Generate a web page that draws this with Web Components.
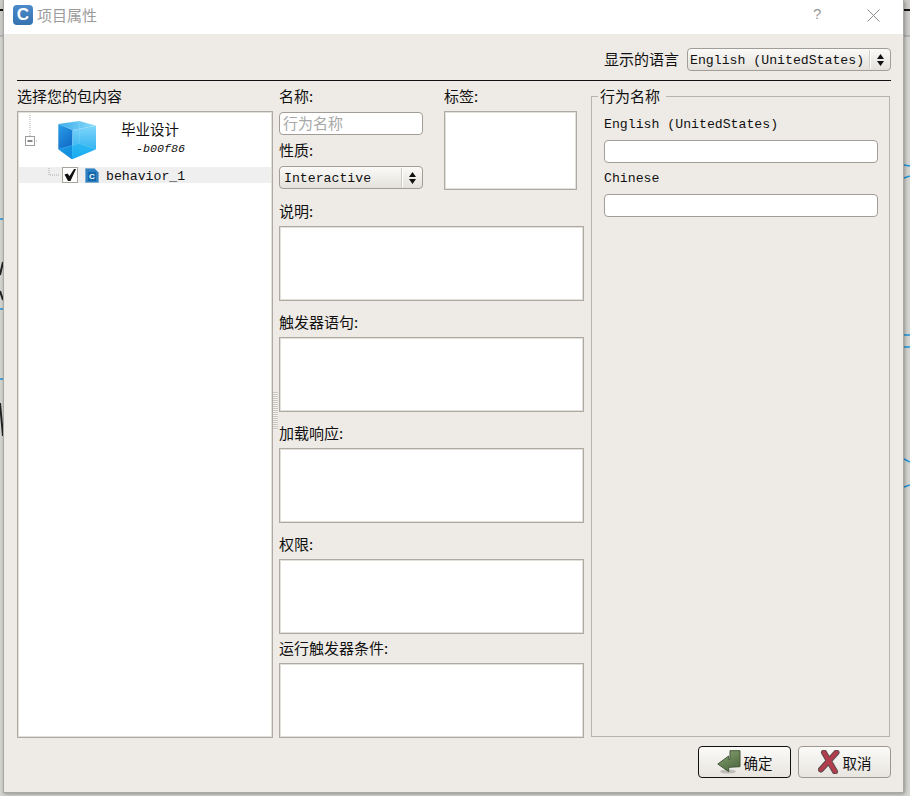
<!DOCTYPE html>
<html lang="zh">
<head>
<meta charset="utf-8">
<title>项目属性</title>
<style>
    html, body { margin: 0; height: 100%; }
    body {
        background: #d6d6d2;
        overflow: hidden;
        font: 15px "Noto Sans CJK SC", sans-serif;
        color: #111;
    }
    svg.backdrop { position: absolute; left: 0; top: 0; }
</style>
</head>
<body>
<svg class="backdrop" width="910" height="796" fill="none">
    <rect x="0" y="0" width="3" height="36" fill="#cfcdca"/>
    <rect x="904" y="0" width="6" height="36" fill="#cfcdca"/>
    <path d="M0 10H3M904 10H910" stroke="#111" stroke-width="2"/>
    <path d="M0 36H3M904 36H910" stroke="#999" stroke-width="1"/>
    <path d="M0 219H3M0 309H3M0 379H3" stroke="#1e96dc" stroke-width="1.5"/>
    <path d="M0 275L3 262M0 291L3 300M0 403L3 436" stroke="#222" stroke-width="2"/>
    <path d="M904 165L910 166M904 178L910 176M904 335H910M904 347H910M904 459L910 462M904 487L910 485" stroke="#1e96dc" stroke-width="1.5"/>
</svg>

<project-dialog>
    <title-bar slot="title">项目属性</title-bar>

    <span slot="lang-label">显示的语言</span>
    <combo-box slot="lang" style="width:204px;padding-left:2px">English (UnitedStates)</combo-box>

    <form-field slot="tree" label="选择您的包内容" label-height="30" fill>
        <package-tree></package-tree>
    </form-field>

    <form-field slot="name" label="名称:" label-height="31" gap="6"><line-input hint="行为名称"></line-input></form-field>
    <form-field slot="name" label="性质:" label-height="31" gap="6"><combo-box>Interactive</combo-box></form-field>
    <form-field slot="tags" label="标签:" label-height="30"><text-box style="height:79px"></text-box></form-field>

    <form-field slot="texts" label="说明:" label-height="37"><text-box></text-box></form-field>
    <form-field slot="texts" label="触发器语句:" label-height="36"><text-box></text-box></form-field>
    <form-field slot="texts" label="加载响应:" label-height="36"><text-box></text-box></form-field>
    <form-field slot="texts" label="权限:" label-height="36"><text-box></text-box></form-field>
    <form-field slot="texts" label="运行触发器条件:" label-height="29"><text-box></text-box></form-field>

    <group-box slot="names" title="行为名称">
        <form-field label="English (UnitedStates)" label-height="31" latin><line-input></line-input></form-field>
        <form-field label="Chinese" label-height="31" latin><line-input></line-input></form-field>
    </group-box>

    <dialog-button slot="buttons" icon="ok" focused>确定</dialog-button>
    <dialog-button slot="buttons" icon="cancel">取消</dialog-button>
</project-dialog>

<script>
class ShadowElement extends HTMLElement {
    constructor() {
        super();
        this.attachShadow({ mode: 'open' });
    }

    connectedCallback() {
        this.shadowRoot.innerHTML = `<style>${this.styles()}</style>${this.markup()}`;
    }

    styles() { return ''; }
    markup() { return '<slot></slot>'; }
}

class ProjectDialog extends ShadowElement {
    styles() {
        return `
            :host {
                display: flex;
                flex-direction: column;
                position: relative;
                box-sizing: border-box;
                width: 901px;
                height: 793px;
                margin-left: 3px;
                background: #eeebe6;
                border: 1px solid #a9a9a4;
                border-top: 0;
                box-shadow: 1px 1px 4px rgba(0, 0, 0, .35);
            }
            .body {
                display: flex;
                flex-direction: column;
                flex: 1;
                padding: 14px 12px 13px 13px;
            }
            .lang {
                display: flex;
                justify-content: flex-end;
                align-items: center;
                gap: 8px;
                height: 23px;
                padding-bottom: 9px;
                border-bottom: 1px solid #111;
            }
            ::slotted(span) { margin-bottom: 2px; }
            .main {
                display: grid;
                grid-template-columns: 256px 311px 306px;
                height: 657px;
            }
            .left { display: flex; }
            .middle {
                position: relative;
                width: 305px;
                margin-left: 6px;
                display: flex;
                flex-direction: column;
            }
            .grip {
                position: absolute;
                left: -6px;
                top: 311px;
                width: 5px;
                height: 38px;
                background: repeating-linear-gradient(#c9c6c0 0 1px, #f4f2ee 1px 2px);
            }
            .top { display: flex; gap: 21px; height: 108px; }
            .name-col { width: 144px; display: flex; flex-direction: column; }
            .tag-col { width: 133px; }
            .right { display: flex; margin-left: 7px; width: 299px; margin-top: 5px; height: 651px; }
            .footer {
                display: flex;
                justify-content: flex-end;
                gap: 7px;
                margin-top: 8px;
            }
            ::slotted(group-box) { flex: 1; }
        `;
    }

    markup() {
        return `
            <slot name="title"></slot>
            <div class="body">
                <div class="lang"><slot name="lang-label"></slot><slot name="lang"></slot></div>
                <div class="main">
                    <div class="left"><slot name="tree"></slot></div>
                    <div class="middle">
                        <div class="grip"></div>
                        <div class="top">
                            <div class="name-col"><slot name="name"></slot></div>
                            <div class="tag-col"><slot name="tags"></slot></div>
                        </div>
                        <slot name="texts"></slot>
                    </div>
                    <div class="right"><slot name="names"></slot></div>
                </div>
                <div class="footer"><slot name="buttons"></slot></div>
            </div>
        `;
    }
}

class TitleBar extends ShadowElement {
    styles() {
        return `
            :host {
                display: flex;
                align-items: center;
                height: 34px;
                background: #fff;
                color: #9b9b9b;
                padding: 0 0 4px 9px;
                box-sizing: border-box;
                flex: none;
            }
            .logo {
                display: flex;
                align-items: center;
                justify-content: center;
                width: 20px;
                height: 20px;
                margin-right: 4px;
                border-radius: 4px;
                background: linear-gradient(#4a8acb, #3672b0);
                color: #fff;
                font: bold 17px "Liberation Sans", sans-serif;
            }
            .title { flex: 1; position: relative; top: -1px; }
            .help {
                position: relative;
                left: 3px;
                top: -2px;
                font: 15px "Liberation Sans", sans-serif;
                color: #999;
                width: 12px;
                margin-right: 45px;
            }
            svg { margin-right: 23px; }
        `;
    }

    markup() {
        return `
            <span class="logo">C</span>
            <span class="title"><slot></slot></span>
            <span class="help">?</span>
            <svg width="13" height="13" viewBox="0 0 13 13"><path d="M.5.5L12.5 12.5M12.5.5L.5 12.5" stroke="#8c8c8c" fill="none"/></svg>
        `;
    }
}

class ComboBox extends ShadowElement {
    styles() {
        return `
            :host {
                display: flex;
                align-items: center;
                box-sizing: border-box;
                height: 23px;
                padding-left: 4px;
                border: 1px solid #a29e97;
                border-radius: 4px;
                background: linear-gradient(#fbfaf8, #e4e1db);
                font: 13.2px "Liberation Mono", monospace;
                color: #111;
            }
            .text { flex: 1; white-space: nowrap; padding-top: 2px; }
            .arrows {
                display: flex;
                align-items: center;
                justify-content: center;
                width: 19px;
                height: 19px;
                border-left: 1px solid #fff;
                box-shadow: -1px 0 0 #cfccc6;
            }
        `;
    }

    markup() {
        return `
            <span class="text"><slot></slot></span>
            <span class="arrows"><svg width="9" height="12" viewBox="0 0 9 12"><path d="M4.5 0L8 5H1zM4.5 12L1 7H8z" fill="#111"/></svg></span>
        `;
    }
}

// label sits at the bottom of its band, a fixed gap above the field
class FormField extends ShadowElement {
    styles() {
        const height = this.getAttribute('label-height');
        const gap = this.getAttribute('gap') || 5;
        const latin = this.hasAttribute('latin');
        return `
            :host { display: block; }
            :host([fill]) { display: flex; flex-direction: column; flex: 1; width: 256px; }
            .label {
                display: flex;
                align-items: flex-end;
                box-sizing: border-box;
                height: ${height}px;
                padding-bottom: ${gap}px;
                white-space: nowrap;
                ${latin ? 'font: 13.2px/20px "Liberation Mono", monospace;' : 'line-height: 20px;'}
            }
            ::slotted(package-tree) { flex: 1; }
        `;
    }

    markup() {
        return `<div class="label">${this.getAttribute('label')}</div><slot></slot>`;
    }
}

class LineInput extends ShadowElement {
    styles() {
        return `
            :host {
                display: flex;
                align-items: center;
                box-sizing: border-box;
                height: 23px;
                padding: 0 0 2px 3px;
                background: #fff;
                border: 1px solid #a29e97;
                border-radius: 4px;
                color: #a8a8a8;
                font-size: 15px;
            }
        `;
    }

    markup() {
        return `<span>${this.getAttribute('hint') || ''}</span>`;
    }
}

class TextBox extends ShadowElement {
    styles() {
        return `
            :host {
                display: block;
                box-sizing: border-box;
                height: 75px;
                background: #fff;
                border: 1px solid #aeaaa3;
                box-shadow: inset 0 0 0 1px #e2dfd9;
            }
        `;
    }
}

class GroupBox extends ShadowElement {
    styles() {
        return `
            :host { display: flex; }
            fieldset {
                flex: 1;
                box-sizing: border-box;
                margin: 0;
                padding: 3px 11px 0 12px;
                border: 1px solid #b8b4ad;
                min-width: 0;
            }
            legend { padding: 0 6px 0 2px; margin-left: -6px; font-size: 15px; line-height: 20px; }
        `;
    }

    markup() {
        return `<fieldset><legend>${this.getAttribute('title')}</legend><slot></slot></fieldset>`;
    }
}

class PackageTree extends ShadowElement {
    styles() {
        return `
            :host {
                display: block;
                box-sizing: border-box;
                background: #fff;
                border: 1px solid #aeaaa3;
                box-shadow: inset 0 0 0 1px #e2dfd9;
                padding: 2px 1px;
            }
            .root {
                display: flex;
                height: 53px;
            }
            .connector, .cube { flex: none; }
            .cube { margin: 6px 0 0 20px; }
            .names { margin-left: 24px; position: relative; }
            .package { position: absolute; left: 0; top: 5px; white-space: nowrap; font-size: 14.5px; line-height: 20px; }
            .id {
                position: absolute;
                left: 15px;
                top: 27px;
                white-space: nowrap;
                font: italic 11.7px/16px "Liberation Mono", monospace;
            }
            .row {
                display: flex;
                align-items: center;
                height: 16px;
                background: #efefef;
                font: 13.2px "Liberation Mono", monospace;
            }
            .check {
                flex: none;
                box-sizing: border-box;
                width: 16px;
                height: 16px;
                background: #fff;
                border: 1px solid #a8a49d;
                margin-left: 2px;
            }
            .check svg, .row svg { display: block; }
            .file { margin: 0 7px 0 7px; position: relative; flex: none; width: 14px; height: 15px; }
            .file b {
                position: absolute;
                left: 3px;
                top: 4px;
                width: 8px;
                text-align: center;
                font: bold 8px/9px "Liberation Sans", sans-serif;
                color: #fff;
            }
            .item-name { padding-top: 2px; }
        `;
    }

    markup() {
        return `
            <div class="root">
                <svg class="connector" width="18" height="53" viewBox="0 0 18 53">
                    <path d="M11 1V23M17 27H18" stroke="#aaa" stroke-dasharray="1 1" fill="none"/>
                    <rect x="6.500" y="22.500" width="9" height="9" fill="#fff" stroke="#9d9d9d"/>
                    <path d="M8.500 27H13.500" stroke="#111"/>
                </svg>
                <svg class="cube" width="40" height="40" viewBox="138 30 120 120">
                    <defs>
                        <linearGradient id="cubeLeft" x1="0" y1="0" x2="0.4" y2="1">
                            <stop offset="0" stop-color="#2a9fe8"/><stop offset="1" stop-color="#0d62c4"/>
                        </linearGradient>
                        <linearGradient id="cubeRight" x1="0" y1="0" x2="0" y2="1">
                            <stop offset="0" stop-color="#7fd6fb"/><stop offset=".6" stop-color="#41b8f3"/><stop offset="1" stop-color="#12a0ec"/>
                        </linearGradient>
                        <linearGradient id="cubeTop" x1="0" y1="0" x2="1" y2="0">
                            <stop offset="0" stop-color="#3aace9"/><stop offset="1" stop-color="#8cdcfb"/>
                        </linearGradient>
                    </defs>
                    <path d="M142 42L185 60L183 148L142 118Z" fill="url(#cubeLeft)"/>
                    <path d="M185 60L255 47V118L183 148Z" fill="url(#cubeRight)"/>
                    <path d="M142 42L205 33L255 47L185 60Z" fill="url(#cubeTop)"/>
                    <path d="M142 118L205 100L255 118L183 148Z" fill="#19b4f2" opacity=".55"/>
                    <path d="M205 33V100M142 118L205 100L255 118" stroke="#a8e6fc" stroke-width="1.500" opacity=".45" fill="none"/>
                </svg>
                <div class="names">
                    <span class="package">毕业设计</span>
                    <span class="id">-b00f86</span>
                </div>
            </div>
            <div class="row">
                <svg width="41" height="16" viewBox="0 0 41 16"><path d="M30 1V8H40" stroke="#aaa" stroke-dasharray="1 1" fill="none"/></svg>
                <span class="check">
                    <svg width="14" height="14" viewBox="0 0 14 14"><path d="M1.500 6.500L4.500 5.500L6.500 8L11 1H13L7.500 13H5Z" fill="#111"/></svg>
                </span>
                <span class="file">
                    <svg width="14" height="15" viewBox="0 0 14 15"><path d="M.5.5H9.500L13.500 4.500V14.500H.5Z" fill="#2d7fc0" stroke="#7faed2"/><rect x="3" y="4" width="8" height="9" fill="#1268ad"/></svg>
                    <b>C</b>
                </span>
                <span class="item-name">behavior_1</span>
            </div>
        `;
    }
}

class DialogButton extends ShadowElement {
    icons = {
        ok: `<svg width="24" height="24" viewBox="0 0 24 24">
                <defs>
                    <linearGradient id="okFill" x1="0" y1="0" x2="0.6" y2="1">
                        <stop offset="0" stop-color="#8ba574"/><stop offset="1" stop-color="#4f6a40"/>
                    </linearGradient>
                </defs>
                <ellipse cx="11" cy="21.500" rx="8" ry="2" fill="#000" opacity=".18"/>
                <path d="M13 .7H23V16.700L11.700 17.300V21.700L.8 14L11.700 6V9.300H13Z" fill="url(#okFill)" stroke="#46573b"/>
             </svg>`,
        cancel: `<svg width="22" height="24" viewBox="0 0 22 24">
                <path d="M6 2.500L17 21.500M18.500 2.500L3 19.500" stroke="#5c4b4d" stroke-width="6" stroke-linecap="round" fill="none"/>
                <path d="M6 2.500L17 21.500M18.500 2.500L3 19.500" stroke="#b23d4c" stroke-width="4" stroke-linecap="round" fill="none"/>
             </svg>`,
    };

    styles() {
        return `
            :host {
                display: flex;
                align-items: center;
                justify-content: center;
                gap: 3px;
                box-sizing: border-box;
                width: 93px;
                height: 32px;
                border: 1px solid #9c9890;
                border-radius: 4px;
                background: linear-gradient(#fbfaf8, #e8e5df);
                font-size: 14.5px;
            }
            :host([focused]) { border-color: #111; }
        `;
    }

    markup() {
        return `${this.icons[this.getAttribute('icon')]}<span><slot></slot></span>`;
    }
}

customElements.define('project-dialog', ProjectDialog);
customElements.define('title-bar', TitleBar);
customElements.define('combo-box', ComboBox);
customElements.define('form-field', FormField);
customElements.define('line-input', LineInput);
customElements.define('text-box', TextBox);
customElements.define('group-box', GroupBox);
customElements.define('package-tree', PackageTree);
customElements.define('dialog-button', DialogButton);
</script>
</body>
</html>
